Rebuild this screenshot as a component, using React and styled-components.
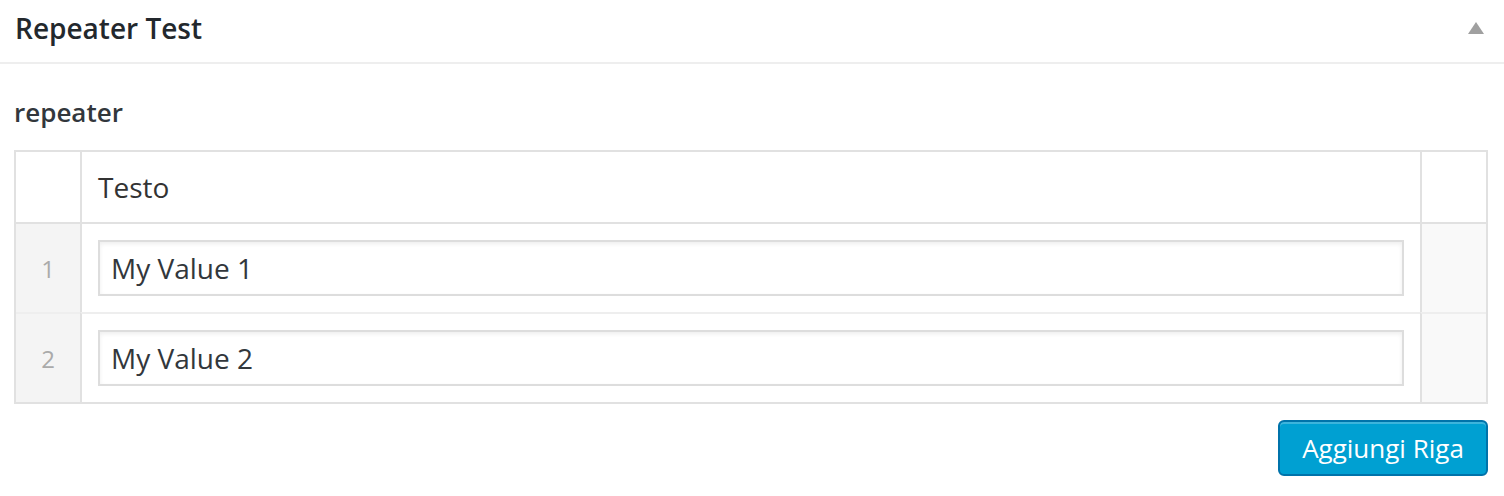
import React from "react";
import styled, { createGlobalStyle } from "styled-components";

const GlobalStyle = createGlobalStyle`
  html, body {
    margin: 0;
    padding: 0;
    background: #ffffff;
    font-family: "Open Sans", "Liberation Sans", sans-serif;
  }
`;

const Box = styled.div`
  width: 1504px;
  background: #ffffff;
`;

const Header = styled.div`
  display: flex;
  align-items: center;
  justify-content: space-between;
  height: 62px;
  padding: 0 20px 0 15px;
  border-bottom: 2px solid #eeeeee;
`;

const Title = styled.h2`
  margin: 0;
  margin-top: -6px;
  font-size: 28px;
  font-weight: 600;
  color: #23282d;
`;

const Toggle = styled.button`
  display: flex;
  padding: 0;
  margin-top: -6px;
  border: 0;
  background: none;
  cursor: pointer;
`;

const Inside = styled.div`
  padding: 30px 16px 0 14px;
`;

const Label = styled.label`
  display: block;
  font-size: 26px;
  font-weight: 600;
  line-height: 36px;
  color: #32373c;
  margin: 0 0 20px 0;
`;

const Table = styled.table`
  width: 100%;
  border: 2px solid #e1e1e1;
  border-spacing: 0;
  border-collapse: separate;
  table-layout: fixed;
`;

const Th = styled.th`
  height: 70px;
  padding: 0 16px;
  text-align: left;
  font-size: 28px;
  font-weight: 400;
  color: #333333;
  border-bottom: 2px solid #e1e1e1;
  & + & {
    border-left: 2px solid #e1e1e1;
  }
`;

const Row = styled.tr`
  & + & td {
    border-top: 2px solid #eeeeee;
  }
`;

const Cell = styled.td`
  height: 56px;
  padding: 16px;
  border-left: ${(p) => (p.$first ? "0" : "2px solid #e1e1e1")};
  background: ${(p) => p.$bg || "#ffffff"};
  text-align: ${(p) => (p.$center ? "center" : "left")};
  color: #aaaaaa;
  font-size: 24px;
  vertical-align: middle;
`;

const Input = styled.input`
  display: block;
  width: 100%;
  height: 56px;
  box-sizing: border-box;
  margin: 0;
  padding: 0 11px;
  border: 2px solid #dddddd;
  box-shadow: inset 0 2px 4px rgba(0, 0, 0, 0.07);
  font-family: "Open Sans", "Liberation Sans", sans-serif;
  font-size: 28px;
  color: #32373c;
  background: #ffffff;
  outline: none;
`;

const Footer = styled.div`
  display: flex;
  justify-content: flex-end;
  padding-top: 16px;
`;

const Button = styled.button`
  width: 210px;
  height: 56px;
  padding: 0;
  border: 2px solid #0073aa;
  border-radius: 6px;
  background: #00a0d2;
  box-shadow: inset 0 2px 0 rgba(120, 200, 230, 0.5);
  color: #ffffff;
  font-family: "Open Sans", "Liberation Sans", sans-serif;
  font-size: 26px;
  cursor: pointer;
`;

const rows = ["My Value 1", "My Value 2"];

export default function App() {
  return (
    <>
      <GlobalStyle />
      <Box>
        <Header>
          <Title>Repeater Test</Title>
          <Toggle aria-label="Chiudi">
            <svg width="16" height="12" viewBox="0 0 16 12">
              <polygon points="8,0 16,12 0,12" fill="#a0a0a0" />
            </svg>
          </Toggle>
        </Header>
        <Inside>
          <Label>repeater</Label>
          <Table>
            <colgroup>
              <col style={{ width: 64 }} />
              <col />
              <col style={{ width: 66 }} />
            </colgroup>
            <thead>
              <tr>
                <Th />
                <Th>Testo</Th>
                <Th />
              </tr>
            </thead>
            <tbody>
              {rows.map((v, i) => (
                <Row key={v}>
                  <Cell $first $center $bg="#f4f4f4">
                    {i + 1}
                  </Cell>
                  <Cell>
                    <Input defaultValue={v} />
                  </Cell>
                  <Cell $bg="#f9f9f9" />
                </Row>
              ))}
            </tbody>
          </Table>
          <Footer>
            <Button>Aggiungi Riga</Button>
          </Footer>
        </Inside>
      </Box>
    </>
  );
}
